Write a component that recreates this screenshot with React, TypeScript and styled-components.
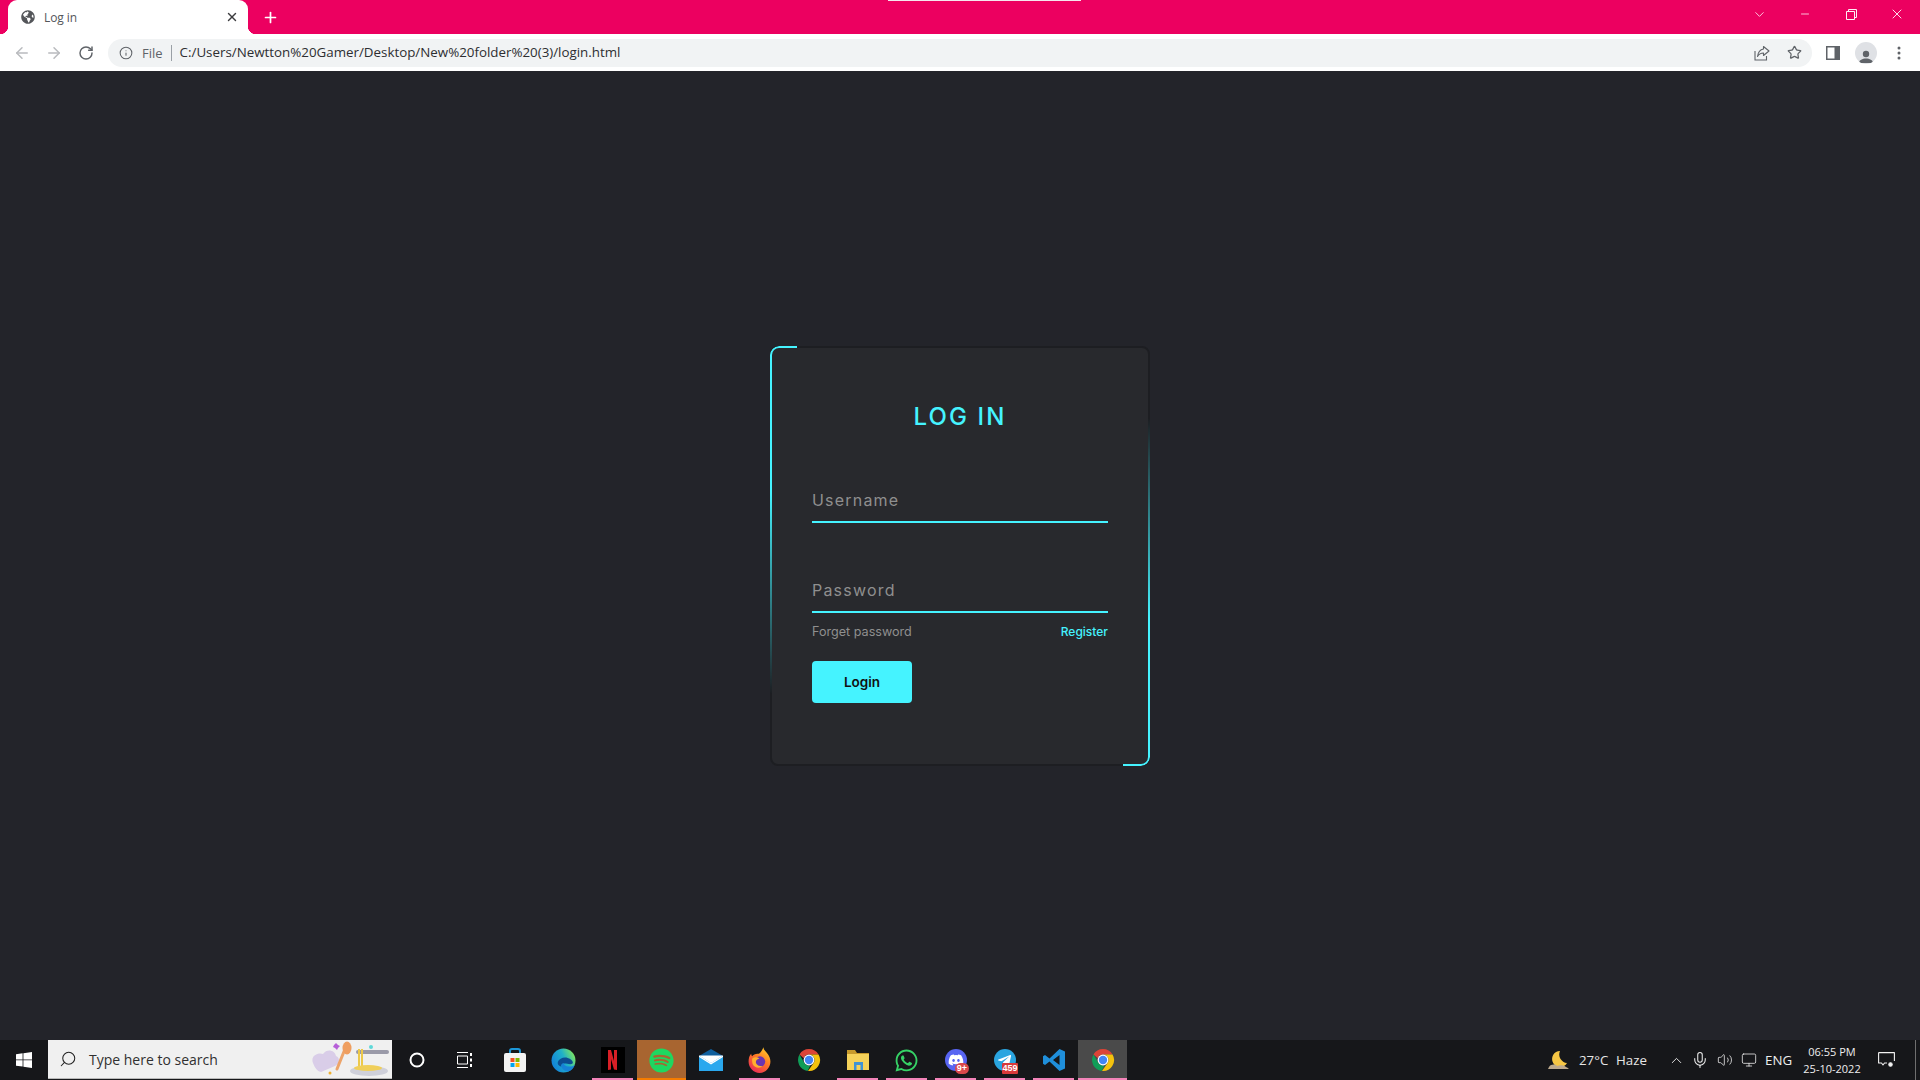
import React from "react";
import styled, { createGlobalStyle } from "styled-components";
import { FaGlobeAmericas, FaWhatsapp, FaSpotify, FaDiscord, FaTelegramPlane } from "react-icons/fa";
import { ArrowLeft, ArrowRight, RotateCw, Info, Star, X, Plus, ChevronDown, ChevronUp, Minus, Search, Mic, Volume2, Monitor } from "lucide-react";

const GlobalStyle = createGlobalStyle`
  html, body { margin: 0; padding: 0; height: 100%; background: #23242a; }
  * { box-sizing: border-box; }
  #root { height: 100%; }
`;

const Page = styled.div`
  width: 1920px; height: 1080px; display: flex; flex-direction: column; overflow: hidden;
  font-family: "Open Sans", "Liberation Sans", sans-serif; position: relative;
`;

/* ---------- Browser chrome ---------- */
const TitleBar = styled.div`
  height: 34px; flex: none; background: #ec0060; display: flex; align-items: flex-start; position: relative;
`;
const TopNotch = styled.div`
  position: absolute; left: 888px; top: 0; width: 193px; height: 1px; background: #f6e6ee;
`;
const Tab = styled.div`
  margin-left: 8px; width: 240px; height: 34px; background: #fff; border-radius: 9px 9px 0 0;
  display: flex; align-items: center; padding: 0 9px 0 13px; position: relative; color: #4a4c50;
  &::before, &::after {
    content: ""; position: absolute; bottom: 0; width: 8px; height: 8px;
  }
  &::before { left: -8px; background: radial-gradient(circle at 0 0, transparent 8px, #fff 8.5px); }
  &::after { right: -8px; background: radial-gradient(circle at 100% 0, transparent 8px, #fff 8.5px); }
`;
const TabTitle = styled.span`
  font-size: 12px; color: #54565a; margin-left: 9px; flex: 1; letter-spacing: -0.1px;
`;
const NewTab = styled.div`
  width: 22px; height: 34px; margin-left: 11px; display: flex; align-items: center; justify-content: center; color: #fff;
`;
const Spacer = styled.div`flex: 1;`;
const WinControl = styled.div`
  width: 46px; height: 28px; display: flex; align-items: center; justify-content: center; color: #ffeef6;
`;
const RestoreIcon = styled.svg`width: 11px; height: 11px;`;

const Toolbar = styled.div`
  height: 37px; flex: none; background: #fff; display: flex; align-items: center; padding-left: 6px;
`;
const NavButton = styled.div<{ $off?: boolean }>`
  width: 32px; height: 32px; display: flex; align-items: center; justify-content: center;
  color: ${(p) => (p.$off ? "#b9bbbe" : "#5f6368")};
`;
const Omnibox = styled.div`
  margin: 0 4px 0 6px; width: 1704px; height: 28px; border-radius: 14px; background: #f1f3f4;
  display: flex; align-items: center; padding-left: 11px; color: #5f6368;
`;
const FileLabel = styled.span`
  font-size: 13px; color: #5f6368; margin-left: 9px; padding-right: 8px; border-right: 1px solid #9aa0a6; line-height: 16px;
`;
const UrlText = styled.span`
  font-size: 13.35px; color: #2d2e31; margin-left: 8px; flex: 1; line-height: 16px; padding-bottom: 1px;
`;
const OmniAction = styled.div`
  width: 32px; display: flex; align-items: center; justify-content: center; color: #5f6368;
`;
const OmniActions = styled.div`display: flex; margin-right: 2px;`;
const ToolAction = styled.div`
  width: 33px; height: 32px; display: flex; align-items: center; justify-content: center; color: #5f6368;
`;
const Avatar = styled.div`
  width: 22px; height: 22px; border-radius: 50%; background: #dfe1e5; display: flex; align-items: flex-end; justify-content: center; overflow: hidden;
`;

/* ---------- Login ---------- */
const Main = styled.main`
  flex: 1; background: #23242a; display: flex; align-items: center; justify-content: center;
`;
const Card = styled.form`
  width: 380px; height: 420px; background: #28292d; border: 2px solid #1d1e22; border-radius: 8px;
  padding: 0 40px; display: flex; flex-direction: column; position: relative;
  &::before {
    content: ""; position: absolute; inset: -2px; border-radius: 9px; padding: 2px; pointer-events: none;
    background:
      linear-gradient(#45f3ff, #45f3ff) left top / 27px 2px no-repeat,
      linear-gradient(#45f3ff, #45f3ff) left top / 12px 12px no-repeat,
      linear-gradient(#45f3ff, #45f3ff) right bottom / 27px 2px no-repeat,
      linear-gradient(#45f3ff, #45f3ff) right bottom / 12px 12px no-repeat,
      linear-gradient(to bottom, #45f3ff 0%, #45f3ff 35%, transparent 83%) left top / 2px 100% no-repeat,
      linear-gradient(to bottom, transparent 17%, #45f3ff 65%, #45f3ff 100%) right top / 2px 100% no-repeat;
    -webkit-mask: linear-gradient(#000 0 0) content-box, linear-gradient(#000 0 0);
    -webkit-mask-composite: xor;
    mask-composite: exclude;
  }
`;
const Title = styled.h2`
  margin: 53px 0 0; height: 32px; line-height: 32px; text-align: center; font-family: Inter, sans-serif;
  font-size: 24px; font-weight: 500; color: #45f3ff; letter-spacing: 2.1px;
`;
const Field = styled.div<{ $top: number }>`
  margin-top: ${(p) => p.$top}px; height: 40px; border-bottom: 2px solid #45f3ff; display: flex; align-items: center; padding-bottom: 3px;
`;
const FieldInput = styled.input`
  width: 100%; background: transparent; border: 0; outline: 0; padding: 0; font-family: Inter, sans-serif;
  font-size: 16px; letter-spacing: 1.2px; color: #fff;
  &::placeholder { color: #8f8f8f; opacity: 1; }
`;
const LinksRow = styled.div`
  margin-top: 9px; display: flex; justify-content: space-between; align-items: center; height: 20px;
  font-family: Inter, sans-serif; font-size: 12.6px;
`;
const ForgetLink = styled.a`color: #8f8f8f;`;
const RegisterLink = styled.a`color: #45f3ff; font-weight: 500; font-size: 12px;`;
const LoginButton = styled.button`
  margin-top: 19px; width: 100px; height: 42px; border: 0; border-radius: 4px; background: #45f3ff;
  font-family: Inter, sans-serif; font-size: 13.5px; font-weight: 600; color: #111;
`;

/* ---------- Taskbar ---------- */
const Taskbar = styled.div`
  height: 40px; flex: none; background: #16171a; display: flex; color: #fff;
`;
const StartButton = styled.div`
  width: 48px; display: flex; align-items: center; justify-content: center;
`;
const SearchBox = styled.div`
  width: 344px; height: 39px; background: #f0f0f0; border: 1px solid #b9b9b9; border-width: 0 0 1px;
  display: flex; align-items: center; padding-left: 11px; color: #222;
`;
const SearchText = styled.span`
  font-size: 14px; color: #303030; margin-left: 12px; flex: 1;
`;
const SearchArt = styled.svg`width: 78px; height: 36px; margin-right: 3px;`;
const TaskItem = styled.div<{ $bg?: string; $line?: string }>`
  width: 49px; height: 40px; display: flex; align-items: center; justify-content: center; position: relative;
  background: ${(p) => p.$bg ?? "transparent"}; font-size: 0;
  &::after {
    content: ""; position: absolute; bottom: 0; height: 2px; left: ${(p) => (p.$bg ? 0 : "4px")}; right: ${(p) => (p.$bg ? 0 : "4px")};
    background: ${(p) => p.$line ?? "transparent"};
  }
`;
const Badge = styled.span<{ $bg: string; $left: number; $w: number; $round?: boolean }>`
  position: absolute; font: 700 9px/11px "Liberation Sans", sans-serif; color: #fff; text-align: center; background: ${(p) => p.$bg};
  left: ${(p) => p.$left}px; width: ${(p) => p.$w}px; bottom: 6px; height: 11px;
  border-radius: ${(p) => (p.$round ? "6px" : "1px")};
`;
const BrandRound = styled.div<{ $c: string }>`
  width: 22px; height: 22px; border-radius: 50%; background: ${(p) => p.$c}; color: #fff; display: flex; align-items: center; justify-content: center;
`;
const NetflixTile = styled.div`
  width: 24px; height: 26px; background: #000; display: flex; align-items: center; justify-content: center;
`;
const TaskViewSvg = styled.svg`width: 15px; height: 16px; margin-right: 3px;`;
const Tray = styled.div`
  display: flex; align-items: center; height: 40px; margin-left: auto; font-size: 13px; color: #e6e6e6;
`;
const TrayIcon = styled.div<{ $w: number }>`
  width: ${(p) => p.$w}px; display: flex; align-items: center; justify-content: center; color: #eee;
`;
const MoonSlot = styled(TrayIcon)`margin-right: 8px;`;
const WeatherText = styled.span<{ $w: number }>`
  width: ${(p) => p.$w}px; font-size: 13.3px; white-space: nowrap;
`;
const Clock = styled.div`
  width: 68px; text-align: center; font-size: 11px; line-height: 17px; color: #eee; margin: 0 3px 0 2px;
`;
const EdgeStrip = styled.div`
  width: 1px; height: 40px; background: #6f6f6f; margin: 0 4px 0 12px;
`;

const ChromeIcon = () => (
  <svg width="24" height="24" viewBox="0 0 24 24">
    <path fill="#db4437" d="M12 1a11 11 0 0 1 9.53 5.5H12a5.5 5.5 0 0 0-5.2 3.7L2.47 6.5A11 11 0 0 1 12 1z" />
    <path fill="#0f9d58" d="M2.47 6.5l4.77 8.25a5.5 5.5 0 0 0 6.2 2.55L10.6 22.9A11 11 0 0 1 2.47 6.5z" />
    <path fill="#f4c20d" d="M21.53 6.5H12a5.5 5.5 0 0 1 4.76 8.25L11 23a11 11 0 0 0 10.53-16.5z" />
    <circle cx="12" cy="12" r="5.4" fill="#fff" />
    <circle cx="12" cy="12" r="4.2" fill="#4285f4" />
  </svg>
);
const WindowsIcon = () => (
  <svg width="16" height="16" viewBox="0 0 16 16" fill="#fff">
    <path d="M0 2.3 6.6 1.3v6.2H0zM7.4 1.2 16 0v7.5H7.4zM0 8.3h6.6v6.3L0 13.7zM7.4 8.3H16V16l-8.6-1.2z" />
  </svg>
);
const StoreIcon = () => (
  <svg width="24" height="26" viewBox="0 0 24 26">
    <path d="M7 7V4a2 2 0 0 1 2-2h6a2 2 0 0 1 2 2v3" fill="none" stroke="#1c97d8" strokeWidth="2" />
    <rect x="1" y="6" width="22" height="19" rx="2" fill="#f3f3f3" />
    <rect x="7.5" y="11" width="4" height="4" fill="#f25022" />
    <rect x="12.5" y="11" width="4" height="4" fill="#7fba00" />
    <rect x="7.5" y="16" width="4" height="4" fill="#00a4ef" />
    <rect x="12.5" y="16" width="4" height="4" fill="#ffb900" />
  </svg>
);
const EdgeIcon = () => (
  <svg width="25" height="25" viewBox="0 0 24 24">
    <defs>
      <linearGradient id="edgeA" x1="0.1" y1="0.7" x2="0.95" y2="0.3">
        <stop offset="0" stopColor="#1487d8" />
        <stop offset="0.55" stopColor="#1fb0c8" />
        <stop offset="1" stopColor="#76e268" />
      </linearGradient>
    </defs>
    <circle cx="12" cy="12" r="11.5" fill="url(#edgeA)" />
    <path fill="#0c4d92" d="M6.5 13.5C8 10 12 8.5 16 9.5c3 .8 5 2.5 5 4.5 0 1-1 1.5-2.5 1.5-2.5 0-4.5-1-7-.5-1.2.3-2 1.5-1.5 3C7.5 17.5 6 16 6.5 13.5z" />
    <path fill="#1782d6" d="M10 18c.5 2 3 4.3 6.5 4.6 2.5-.8 5.5-3.4 6.5-6.6-1.5 1.5-5 2.4-8 1.5-1.6-.5-3-1.5-3-3-1.5.5-2.5 1.7-2 3.5z" />
  </svg>
);
const MailIcon = () => (
  <svg width="24" height="22" viewBox="0 0 24 22">
    <path d="M0 7 12 0l12 7v1H0z" fill="#0e5f9e" />
    <rect y="7" width="24" height="15" fill="#2aa8ee" />
    <path d="M0 6.5 12 14 24 6.5V8L12 15.5 0 8z" fill="#fff" />
    <path d="M12 14 24 6.5H0z" fill="#fff" />
  </svg>
);
const FirefoxIcon = () => (
  <svg width="25" height="26" viewBox="0 0 24 25">
    <defs>
      <linearGradient id="foxA" x1="0.8" y1="0" x2="0.2" y2="1">
        <stop offset="0" stopColor="#ffd02a" />
        <stop offset="0.45" stopColor="#ff7a24" />
        <stop offset="1" stopColor="#e8265a" />
      </linearGradient>
    </defs>
    <path fill="url(#foxA)" d="M16 0c-.5 2.5 1.5 3.5 3 5.5 2.5 3 3.5 6 3.5 8.5 0 6-4.8 11-10.5 11S1.500 20 1.500 14c0-3 .8-6 2.500-7.500 0 1 .3 1.800 1 2.300C6 7 9 6 11.500 6.500 14 4.500 14.800 2.500 16 0z" />
    <circle cx="12.5" cy="14" r="5" fill="#6a35b0" />
    <path fill="#ffb02e" d="M5 11c2-1.5 5-1.5 7 0-2 .5-3.5 1.5-3.5 3.500S11 19 15 18.500c-3 2.500-8 1.500-9.500-2C5 15 4.700 12.500 5 11z" />
  </svg>
);
const ExplorerIcon = () => (
  <svg width="24" height="22" viewBox="0 0 24 22">
    <path d="M1 1h8l2 3h12v4H1z" fill="#c79a2c" />
    <rect x="1" y="5" width="22" height="16" fill="#f5d25a" />
    <rect x="8" y="13" width="9" height="8" fill="#3f93d5" />
    <rect x="10.5" y="16" width="4" height="5" fill="#f5d25a" />
  </svg>
);
const VSCodeIcon = () => (
  <svg width="24" height="24" viewBox="0 0 24 24">
    <path fill="#1f8fdb" d="M17.5 1 23 3.5v17L17.5 23l-10-9.5L3 17l-2-1.200V8.200L3 7l4.500 3.500zM17.5 7 11 12l6.500 5z" />
  </svg>
);
const MoonIcon = () => (
  <svg width="24" height="22" viewBox="0 0 24 22">
    <path d="M13 2a8 8 0 1 0 7 12 8.5 8.5 0 0 1-7-12z" fill="#f6c644" />
    <path d="M2 18c2-3 6-3 8-1 3-1 7-1 9 1 1 .5 2 1 3 2H1z" fill="#bda98d" />
  </svg>
);
const NotifyIcon = () => (
  <svg width="17" height="16" viewBox="0 0 17 16" fill="none" stroke="#f2f2f2" strokeWidth="1.1">
    <path d="M.6.6h15.8v8.400M9 11H6.500L5 13l-1.500-2H.6V.6" strokeLinejoin="round" />
    <circle cx="12.5" cy="12.5" r="1.7" fill="#f2f2f2" />
  </svg>
);
const ShareIcon = () => (
  <svg width="16" height="16" viewBox="0 0 16 16" fill="none" stroke="#5f6368" strokeWidth="1.1">
    <path d="M1 6v9h11.500v-4" />
    <path d="M9.5 1.5 15 6l-5.500 4.500V8C7 8 5 9 3.500 11.500 4 7.500 6.500 4.500 9.500 4z" strokeLinejoin="round" />
  </svg>
);
const PanelIcon = () => (
  <svg width="14" height="14" viewBox="0 0 14 14">
    <rect width="14" height="14" fill="#5f6368" />
    <rect x="1.5" y="1.5" width="7" height="11" fill="#fff" />
  </svg>
);
const PersonIcon = () => (
  <svg width="14" height="14" viewBox="0 0 14 14" fill="#5f6368">
    <circle cx="7" cy="4" r="3.2" />
    <path d="M0 13c0-3 3.500-4.500 7-4.500S14 10 14 13z" />
  </svg>
);
const DotsIcon = () => (
  <svg width="4" height="14" viewBox="0 0 4 14" fill="#5f6368">
    <circle cx="2" cy="2" r="1.5" />
    <circle cx="2" cy="7" r="1.5" />
    <circle cx="2" cy="12" r="1.5" />
  </svg>
);
const NetflixGlyph = () => (
  <svg width="9" height="20" viewBox="0 0 9 20">
    <path d="M0 0h3l3 11V0h3v20l-3-.5L3 9v10.500L0 20z" fill="#d81f26" />
  </svg>
);
const CortanaIcon = () => (
  <svg width="16" height="16" viewBox="0 0 16 16">
    <circle cx="8" cy="8" r="6.5" fill="none" stroke="#fff" strokeWidth="2" />
  </svg>
);
const TaskViewIcon = () => (
  <TaskViewSvg viewBox="0 0 15 16" fill="none" stroke="#fff" strokeWidth="1">
    <path d="M0 .5h11M0 15.500h11M.5 4h10v8H.5z" />
    <path d="M14 1v3M14 6.500v3M14 12v3" strokeWidth="2" />
  </TaskViewSvg>
);

const App = () => (
  <Page>
    <GlobalStyle />
    <TitleBar>
      <TopNotch />
      <Tab>
        <FaGlobeAmericas size={14} color="#54565a" />
        <TabTitle>Log in</TabTitle>
        <X size={14} strokeWidth={2.4} color="#3c3c3f" />
      </Tab>
      <NewTab><Plus size={17} strokeWidth={2.4} /></NewTab>
      <Spacer />
      <WinControl><ChevronDown size={15} strokeWidth={1.3} /></WinControl>
      <WinControl><Minus size={12} strokeWidth={1.6} /></WinControl>
      <WinControl>
        <RestoreIcon viewBox="0 0 11 11" fill="none" stroke="currentColor">
          <path d="M.5 2.500h8v8h-8zM2.500 2.500v-2h8v8h-2" />
        </RestoreIcon>
      </WinControl>
      <WinControl><X size={16} strokeWidth={1.4} /></WinControl>
    </TitleBar>
    <Toolbar>
      <NavButton $off><ArrowLeft size={18} strokeWidth={2} /></NavButton>
      <NavButton $off><ArrowRight size={18} strokeWidth={2} /></NavButton>
      <NavButton><RotateCw size={16} strokeWidth={2.2} /></NavButton>
      <Omnibox>
        <Info size={14} strokeWidth={1.8} />
        <FileLabel>File</FileLabel>
        <UrlText>C:/Users/Newtton%20Gamer/Desktop/New%20folder%20(3)/login.html</UrlText>
        <OmniActions>
          <OmniAction><ShareIcon /></OmniAction>
          <OmniAction><Star size={15} strokeWidth={2} /></OmniAction>
        </OmniActions>
      </Omnibox>
      <ToolAction><PanelIcon /></ToolAction>
      <ToolAction><Avatar><PersonIcon /></Avatar></ToolAction>
      <ToolAction><DotsIcon /></ToolAction>
    </Toolbar>

    <Main>
      <Card>
        <Title>LOG IN</Title>
        <Field $top={50}><FieldInput placeholder="Username" /></Field>
        <Field $top={50}><FieldInput placeholder="Password" type="password" /></Field>
        <LinksRow>
          <ForgetLink>Forget password</ForgetLink>
          <RegisterLink>Register</RegisterLink>
        </LinksRow>
        <LoginButton type="button">Login</LoginButton>
      </Card>
    </Main>

    <Taskbar>
      <StartButton><WindowsIcon /></StartButton>
      <SearchBox>
        <Search size={18} strokeWidth={1.4} transform="scale(-1 1)" />
        <SearchText>Type here to search</SearchText>
        <SearchArt viewBox="0 0 78 36">
          <path d="M2 22c-3-8 6-11 10-9 4-6 12-4 13 2 5 2 3 9-1 10l-14 6c-4-1-6-4-8-9z" fill="#d9cde8" />
          <path d="M26 28 34 8" stroke="#eda46a" strokeWidth="3" strokeLinecap="round" />
          <ellipse cx="36" cy="7" rx="4.5" ry="6.5" fill="#ef9e5f" />
          <path d="M23 4l2-2 2 2 2 1-2 2-1 2-2-2-2-1z" fill="#b65fd8" />
          <circle cx="60" cy="6" r="2" fill="#5fd8d8" />
          <circle cx="19" cy="32" r="1.5" fill="#f0b030" />
          <path d="M47 11h29" stroke="#9a9aa8" strokeWidth="4" strokeLinecap="round" />
          <path d="M48 8v18M51 8v18" stroke="#ecc94b" strokeWidth="2" />
          <ellipse cx="58" cy="30" rx="19" ry="5" fill="#cfd0da" />
          <ellipse cx="57" cy="27" rx="14" ry="3" fill="#f0cf5a" />
        </SearchArt>
      </SearchBox>
      <TaskItem><CortanaIcon /></TaskItem>
      <TaskItem><TaskViewIcon /></TaskItem>
      <TaskItem><StoreIcon /></TaskItem>
      <TaskItem><EdgeIcon /></TaskItem>
      <TaskItem $line="#f384b9"><NetflixTile><NetflixGlyph /></NetflixTile></TaskItem>
      <TaskItem $bg="#a86530" $line="#f57c00"><FaSpotify size={25} color="#1ed760" /></TaskItem>
      <TaskItem><MailIcon /></TaskItem>
      <TaskItem $line="#f384b9"><FirefoxIcon /></TaskItem>
      <TaskItem><ChromeIcon /></TaskItem>
      <TaskItem $line="#f384b9"><ExplorerIcon /></TaskItem>
      <TaskItem $line="#f384b9"><FaWhatsapp size={25} color="#36d266" /></TaskItem>
      <TaskItem $line="#f384b9">
        <BrandRound $c="#5865f2"><FaDiscord size={16} /></BrandRound>
        <Badge $bg="#d9484a" $left={24} $w={14} $round>9+</Badge>
      </TaskItem>
      <TaskItem $line="#f384b9">
        <BrandRound $c="#2aa5e0"><FaTelegramPlane size={15} /></BrandRound>
        <Badge $bg="#d93a3a" $left={22} $w={16}>459</Badge>
      </TaskItem>
      <TaskItem $line="#f384b9"><VSCodeIcon /></TaskItem>
      <TaskItem $bg="#4a4a4a" $line="#f384b9"><ChromeIcon /></TaskItem>
      <Tray>
        <MoonSlot $w={24}><MoonIcon /></MoonSlot>
        <WeatherText $w={37}>27°C</WeatherText>
        <WeatherText $w={48}>Haze</WeatherText>
        <TrayIcon $w={24}><ChevronUp size={17} strokeWidth={1.3} /></TrayIcon>
        <TrayIcon $w={24}><Mic size={18} strokeWidth={1.4} /></TrayIcon>
        <TrayIcon $w={26}><Volume2 size={16} strokeWidth={1.2} /></TrayIcon>
        <TrayIcon $w={22}><Monitor size={16} strokeWidth={1.2} /></TrayIcon>
        <TrayIcon $w={36}><WeatherText $w={26}>ENG</WeatherText></TrayIcon>
        <Clock>06:55 PM<br />25-10-2022</Clock>
        <TrayIcon $w={34}><NotifyIcon /></TrayIcon>
        <EdgeStrip />
      </Tray>
    </Taskbar>
  </Page>
);

export default App;
